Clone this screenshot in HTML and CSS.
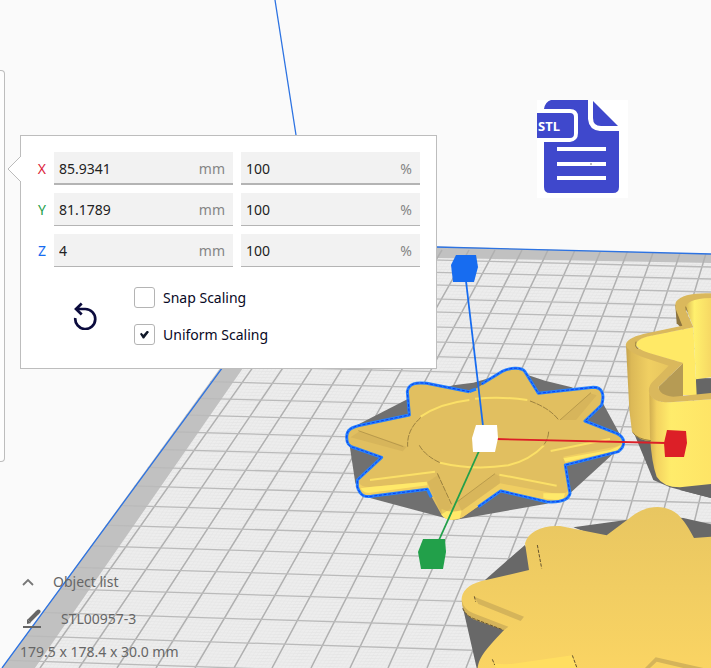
FILE: index.html
```html
<!DOCTYPE html>
<html lang="en">
<head>
<meta charset="utf-8">
<meta name="viewport" content="width=device-width, initial-scale=1">
<title>Scale model</title>
<link rel="stylesheet" href="styles.css">
</head>
<body>
<main class="viewport">
  <svg class="scene" viewBox="0 0 711 668" preserveAspectRatio="xMinYMin slice" aria-hidden="true">
    <defs>
      <clipPath id="bed"><path d="M311 243L711 254V668H2Z"/></clipPath>
      <pattern id="fine" width="4" height="3" patternUnits="userSpaceOnUse" patternTransform="skewX(-32) rotate(1.6)">
        <path d="M0 0H4M0 0V3" stroke="#dedede" stroke-width="1" fill="none"/>
      </pattern>
      <linearGradient id="wall"><stop offset="0" stop-color="#c5a34d"/><stop offset=".12" stop-color="#dcb957"/><stop offset=".5" stop-color="#f0cf62"/><stop offset="1" stop-color="#e6c45e"/></linearGradient>
      <linearGradient id="front"><stop offset="0" stop-color="#d0ad50"/><stop offset=".12" stop-color="#f3d260"/><stop offset=".35" stop-color="#ffec6b"/><stop offset="1" stop-color="#fee466"/></linearGradient>
      <linearGradient id="post"><stop offset="0" stop-color="#d9b656"/><stop offset=".35" stop-color="#fff06d"/><stop offset="1" stop-color="#f6d864"/></linearGradient>
      <linearGradient id="large" x2="0" y2="1"><stop offset="0" stop-color="#e8c661"/><stop offset="1" stop-color="#fad463"/></linearGradient>
    </defs>
    <path d="M311 243L711 254V668H2Z" fill="#c1c1c1"/>
    <path d="M322 254L437 258L711 263V668H35Z" fill="#ededed"/>
    <path d="M322 254L437 258L711 263V668H35Z" fill="url(#fine)" opacity=".6"/>
    <g clip-path="url(#bed)" stroke="#b0b0b0" stroke-width="1.5" fill="none">
      <path d="M336 250L40 668M363 250L79 668M389 250L117 668M416 250L156 668M442 250L195 668M469 250L234 668M495 250L272 668M522 250L311 668M548 250L350 668M575 250L388 668M601 250L427 668M628 250L466 668M654 250L504 668M681 250L543 668M707 250L582 668M734 250L621 668M760 250L659 668M787 250L698 668"/>
      <path stroke="#bababa" stroke-width="1.3" d="M0 249L711 267M0 262L711 279M0 274L711 292M0 288L711 306M0 301L711 319M0 316L711 334M0 331L711 349M0 345L711 364M0 360L711 379M0 376L711 395M0 393L711 412M0 410L711 429M0 427L711 447M0 445L711 465M0 463L711 484M0 482L711 503M0 502L711 523M0 522L711 543M0 543L711 565M0 565L711 587M0 587L711 609M0 611L711 634M0 635L711 658M0 660L711 684"/>
    </g>
    <path d="M311 247L2 668M436 247L711 254M275 0L296 135" fill="none" stroke="#2d73e2" stroke-width="1.3"/>

    <!-- Selected star and its shadow -->
    <g transform="translate(330 350) scale(.33333)">
      <path d="M52 240L232 148L370 106L430 98L555 62L645 92L725 112L820 162L884 280L720 430L650 461L370 511L120 444L76 400Z" fill="#707070"/>
      <path d="M50 250C52 235 75 228 95 225L238 195L232 125C235 102 260 96 290 100L418 125L440 115L515 65C535 52 565 50 580 60L625 130L790 112C815 112 822 130 820 155L765 213L860 250C886 260 886 286 865 305L706 345L720 430C715 450 690 458 650 455L512 423L400 500C385 512 350 512 335 495L292 418L110 440C90 438 80 415 82 390L155 322L65 292C50 285 48 265 50 250Z" fill="#e1bf60"/>
      <path d="M85 395Q92 412 120 411L292 395L300 417L110 438Q90 435 85 410ZM335 476Q360 490 395 482L510 400L670 430Q710 434 716 420L718 437Q700 458 650 452L512 421L400 500Q366 518 335 495ZM700 320L840 293Q870 290 878 275L876 292Q862 308 706 343Z" fill="#f0ce62"/>
      <path d="M335 478Q360 491 395 481L390 505Q350 518 335 495ZM120 411L290 395L292 406L120 428Q100 430 92 415ZM700 325L840 300L875 285L860 302L706 335ZM640 430L705 430L700 447Q670 452 640 445Z" fill="#ffe969"/>
      <path d="M292 397L325 374L365 474L335 493ZM382 455L495 371L508 379L510 400L395 482Z" fill="#cfae56" opacity=".5"/>
      <path d="M62 262L90 243L230 290L218 304ZM690 210L780 130L800 136L738 210Z" fill="#cdac55" opacity=".5"/>
      <path d="M418 125L290 100C260 96 235 100 232 125L238 195L95 225C65 231 50 238 50 262C50 280 55 290 75 294L155 322L82 390V410C90 438 105 443 130 438L292 418L304 442M445 470L512 423L650 455C690 458 715 450 720 430L706 345L865 305C888 287 886 262 860 250L765 213L815 165C825 130 815 112 790 112L625 130L585 65C575 50 540 52 515 65L455 102M418 125L438 117" fill="none" stroke="#2481ff" stroke-width="9" stroke-linejoin="round"/>
      <path d="M418 125L290 100C260 96 235 100 232 125L238 195L95 225C65 231 50 238 50 262C50 280 55 290 75 294L155 322L82 390V410C90 438 105 443 130 438L292 418M445 470L512 423L650 455C690 458 715 450 720 430L706 345L865 305C888 287 886 262 860 250L765 213L815 165C825 130 815 112 790 112L625 130L585 65C575 50 540 52 515 65L455 102" fill="none" stroke="#0b3df0" stroke-width="3" stroke-dasharray="9 5"/>
      <path d="M272 200Q330 160 418 150M435 146Q520 139 592 150M330 338Q430 362 535 346Q600 330 642 286M120 390L315 365M508 374L680 407M662 303L840 267" fill="none" stroke="#fbe067" stroke-width="6"/>
      <path d="M272 203Q230 240 233 290M268 286Q285 317 330 338M600 153Q660 175 686 210M656 245Q654 270 640 286M322 370L365 464" fill="none" stroke="#79622f" stroke-width="2" stroke-dasharray="18 3"/>
      <path d="M85 242L220 290M382 455L495 371M690 210L783 128" fill="none" stroke="#a88b43" stroke-width="2"/>
    </g>

    <!-- Tall cutter -->
    <g transform="translate(600 240) scale(.33333)">
      <path d="M288 415H333V470H288ZM98 570L160 720L210 742L333 774V560H98Z" fill="#666"/>
      <path d="M78 315L88 510L96 575Q115 603 155 603V440L215 375L130 330Z" fill="url(#wall)"/>
      <path d="M226 195L230 250L250 270L260 200Z" fill="#8c7440"/>
      <path d="M106 315Q112 292 160 285L280 262L290 465H245V368L130 335Z" fill="#ffe966"/>
      <path d="M256 200Q262 173 333 173V412L288 418L280 262Z" fill="url(#post)"/>
      <path d="M176 440L249 370V472H190Q176 462 176 440Z" fill="#b69b54"/>
      <path d="M148 460Q160 487 210 487L333 478V732L240 742Q190 742 170 710Q155 670 150 590Z" fill="url(#front)"/>
      <path d="M333 160Q250 157 228 185Q223 198 230 215L247 257L130 282Q78 295 77 316Q82 335 125 350L206 377L155 428Q143 443 148 462Q160 488 210 487L333 478V459L220 470Q176 465 176 440L250 369L145 338Q108 327 107 313Q115 292 165 285L280 262L257 210Q252 176 333 174Z" fill="#dab85c"/>
      <path d="M257 200L262 215M108 305L107 318L113 327M98 577Q110 597 153 602" fill="none" stroke="#725d2d" stroke-width="2"/>
    </g>

    <!-- Large star -->
    <g transform="translate(450 490) scale(.33333)">
      <path d="M690 0L783 24V0ZM370 112L615 78L700 84L783 103V150L470 150ZM225 165L105 270L180 280L260 235ZM38 350L80 534H110L165 415Z" fill="#686868"/>
      <path d="M35 325C38 295 70 278 105 271L237 240L225 160C235 125 275 105 330 108L470 136L555 72C600 43 650 46 682 72C700 88 720 120 732 144L783 140V534H83C87 505 100 485 162 420L70 382C45 370 34 350 35 325Z" fill="url(#large)"/>
      <path d="M35 330Q42 360 70 370L175 410L162 421L70 388Q35 370 35 330ZM73 320L222 380L212 393L85 342ZM585 534L617 502L720 525L760 534H700L620 515L600 534Z" fill="#d5b45a"/>
      <path d="M125 516Q145 526 190 521L367 496L380 534H140Z" fill="#ffde61"/>
      <path d="M262 165L275 235M73 319L77 335M127 508L134 525M367 496L381 534M38 355Q48 378 74 387L160 420" fill="none" stroke="#66532d" stroke-width="3" stroke-dasharray="10 4"/>
    </g>

    <!-- Scaling handles -->
    <g fill="none" stroke-width="1.8"><path d="M466 281L483 426" stroke="#176cf0"/><path d="M496 439L666 443" stroke="#dc1f27"/><path d="M479 451L439 540" stroke="#22a04a"/></g>
    <path d="M456 255L476 255L478 267L474 282L453 282L451 265Z" fill="#176cf0"/>
    <path d="M476 425H497L498 438L495 452H473L472 438Z" fill="#fff"/>
    <path d="M667 430L686 431L687 443L684 457L665 457L664 443Z" fill="#dc1f27"/>
    <path d="M423 539H445L446 552L443 569H421L418 552Z" fill="#22a04a"/>
  </svg>

  <div class="workspace">
    <aside class="tool-rail" aria-label="Tools"></aside>
    <form class="scale-panel">
      <svg class="pointer" viewBox="0 0 15 28" aria-hidden="true"><path d="M15 0L1 14L15 28" fill="#fff"/><path d="M14 1L1 14L14 27" fill="none" stroke="#bbb"/></svg>
      <div class="dimensions">
        <label class="axis axis-x" for="x-size">X</label>
        <div class="field active"><input id="x-size" value="85.9341"><span>mm</span></div>
        <div class="field active"><input aria-label="X percent" value="100"><span>%</span></div>
        <label class="axis axis-y" for="y-size">Y</label>
        <div class="field"><input id="y-size" value="81.1789"><span>mm</span></div>
        <div class="field"><input aria-label="Y percent" value="100"><span>%</span></div>
        <label class="axis axis-z" for="z-size">Z</label>
        <div class="field"><input id="z-size" value="4"><span>mm</span></div>
        <div class="field"><input aria-label="Z percent" value="100"><span>%</span></div>
      </div>
      <div class="options">
        <button class="reset" type="button" aria-label="Reset scale">
          <svg viewBox="0 0 24 28"><path d="M2.3 16A10 10 0 1 0 12.3 7H3M8.7 1.5L3 7L8.7 12.5" fill="none" stroke="#0b0b3d" stroke-width="2.7"/></svg>
        </button>
        <div class="checks">
          <label class="check"><input type="checkbox">Snap Scaling</label>
          <label class="check"><input type="checkbox" checked>Uniform Scaling</label>
        </div>
      </div>
    </form>
    <svg class="file-icon" viewBox="0 0 91 98" role="img" aria-label="STL file">
      <path d="M0 0H91V98H0Z" fill="#fff"/>
      <path d="M14 0H51V19Q52 30 63 31H82V87Q82 93 76 93H13Q7 93 7 87V42H33Q41 41 41 33V17Q41 9 33 9H7Q8 2 14 0ZM56 1L81 26H64Q56 26 56 18ZM0 13H33Q37 13 37 17V34Q37 38 33 38H0Z" fill="#3f48cc"/>
      <path d="M20 47H69V51H20ZM20 62H69V66H20ZM20 76H69V80H20Z" fill="#fff"/>
      <path d="M53 63H55V65H53Z" fill="#bbb"/>
      <text x="1" y="31">STL</text>
    </svg>
  </div>

  <footer class="object-info">
    <button class="list-toggle" type="button"><svg viewBox="0 0 15 10" aria-hidden="true"><path d="M3 8L8 3L13 8" fill="none" stroke="#777" stroke-width="1.8"/></svg>Object list</button>
    <button class="object-name" type="button"><svg viewBox="0 0 22 20" aria-hidden="true"><path d="M3 18H21" stroke="#666" stroke-width="2"/><path d="M9 12L17 4" stroke="#666" stroke-width="4"/><path d="M17 4L18.500 2.500" stroke="#666" stroke-width="4" stroke-linecap="round"/><path d="M7 10L11 14L7 15Z" fill="#666"/></svg>STL00957-3</button>
    <div class="object-size">179.5 x 178.4 x 30.0 mm</div>
  </footer>
</main>
</body>
</html>
```
FILE: styles.css
```css
* {
  box-sizing: border-box;
}

body {
  margin: 0;
  background: #fafafa;
  font: 14px/20px "Noto Sans", sans-serif;
}

button,
input {
  font: inherit;
}

button {
  border: 0;
  padding: 0;
  background: none;
}

.viewport {
  position: relative;
  display: flex;
  flex-direction: column;
  justify-content: space-between;
  min-height: 100vh;
  overflow: hidden;
}

.scene {
  position: absolute;
  inset: 0;
  width: 100%;
  height: 100%;
}

.workspace {
  position: relative;
  display: flex;
  align-items: flex-start;
  padding-top: 70px;
}

.tool-rail {
  flex: 0 0 5px;
  height: 392px;
  background: #fdfdfd;
  border: 1px solid #bdbdbd;
  border-left: 0;
  border-radius: 0 4px 4px 0;
}

.scale-panel {
  position: relative;
  flex: 0 1 417px;
  margin: 65px 0 0 15px;
  padding: 16px 16px 23px;
  background: #fff;
  border: 1px solid #bdbdbd;
}

.pointer {
  position: absolute;
  top: 19px;
  left: -14px;
  width: 15px;
  height: 28px;
}

.dimensions {
  display: grid;
  grid-template-columns: 9px 1fr 1fr;
  gap: 8px;
}

.dimensions .axis {
  align-self: center;
  justify-self: end;
}

.axis-x { color: #dc1f3c; }
.axis-y { color: #22a04a; }
.axis-z { color: #176cf0; }

.field {
  display: flex;
  align-items: center;
  height: 33px;
  padding: 2px 8px 0 5px;
  background: #f2f2f2;
  border-bottom: 1px solid #b4b4b4;
}

.field.active {
  border-bottom-width: 2px;
}

.field input {
  flex: 1;
  width: 0;
  padding: 0;
  border: 0;
  background: none;
  color: #222;
}

.field span {
  color: #858585;
}

.options {
  display: flex;
  align-items: center;
  gap: 36px;
  padding: 20px 0 0 36px;
}

.reset {
  width: 25px;
  height: 28px;
}

.reset svg {
  display: block;
  width: 24px;
  height: 28px;
}

.checks {
  display: grid;
  gap: 16px;
}

.check {
  display: flex;
  align-items: center;
  gap: 8px;
  height: 21px;
  color: #080824;
}

.check input {
  appearance: none;
  display: grid;
  place-items: center;
  width: 21px;
  height: 21px;
  margin: 0;
  border: 1px solid #b4b4b4;
  border-radius: 3px;
  background: #fff;
}

.check input:checked::before {
  content: "";
  width: 9px;
  height: 8px;
  background: #101828;
  clip-path: polygon(0 45%, 15% 28%, 38% 52%, 80% 0, 100% 18%, 45% 100%, 32% 100%);
}

.file-icon {
  flex: none;
  width: 91px;
  height: 98px;
  margin: 30px 0 0 100px;
}

.file-icon text {
  fill: #fff;
  font: bold 13px "Noto Sans", sans-serif;
}

.object-info {
  position: relative;
  display: flex;
  flex-direction: column;
  align-items: flex-start;
  gap: 13px;
  padding: 0 20px 6px;
  color: #666;
}

.object-info button {
  display: flex;
  align-items: center;
  color: inherit;
}

.list-toggle {
  gap: 18px;
  margin-bottom: 4px;
}

.list-toggle svg {
  width: 15px;
  height: 10px;
}

.object-name {
  gap: 19px;
}

.object-name svg {
  width: 22px;
  height: 20px;
}
```
